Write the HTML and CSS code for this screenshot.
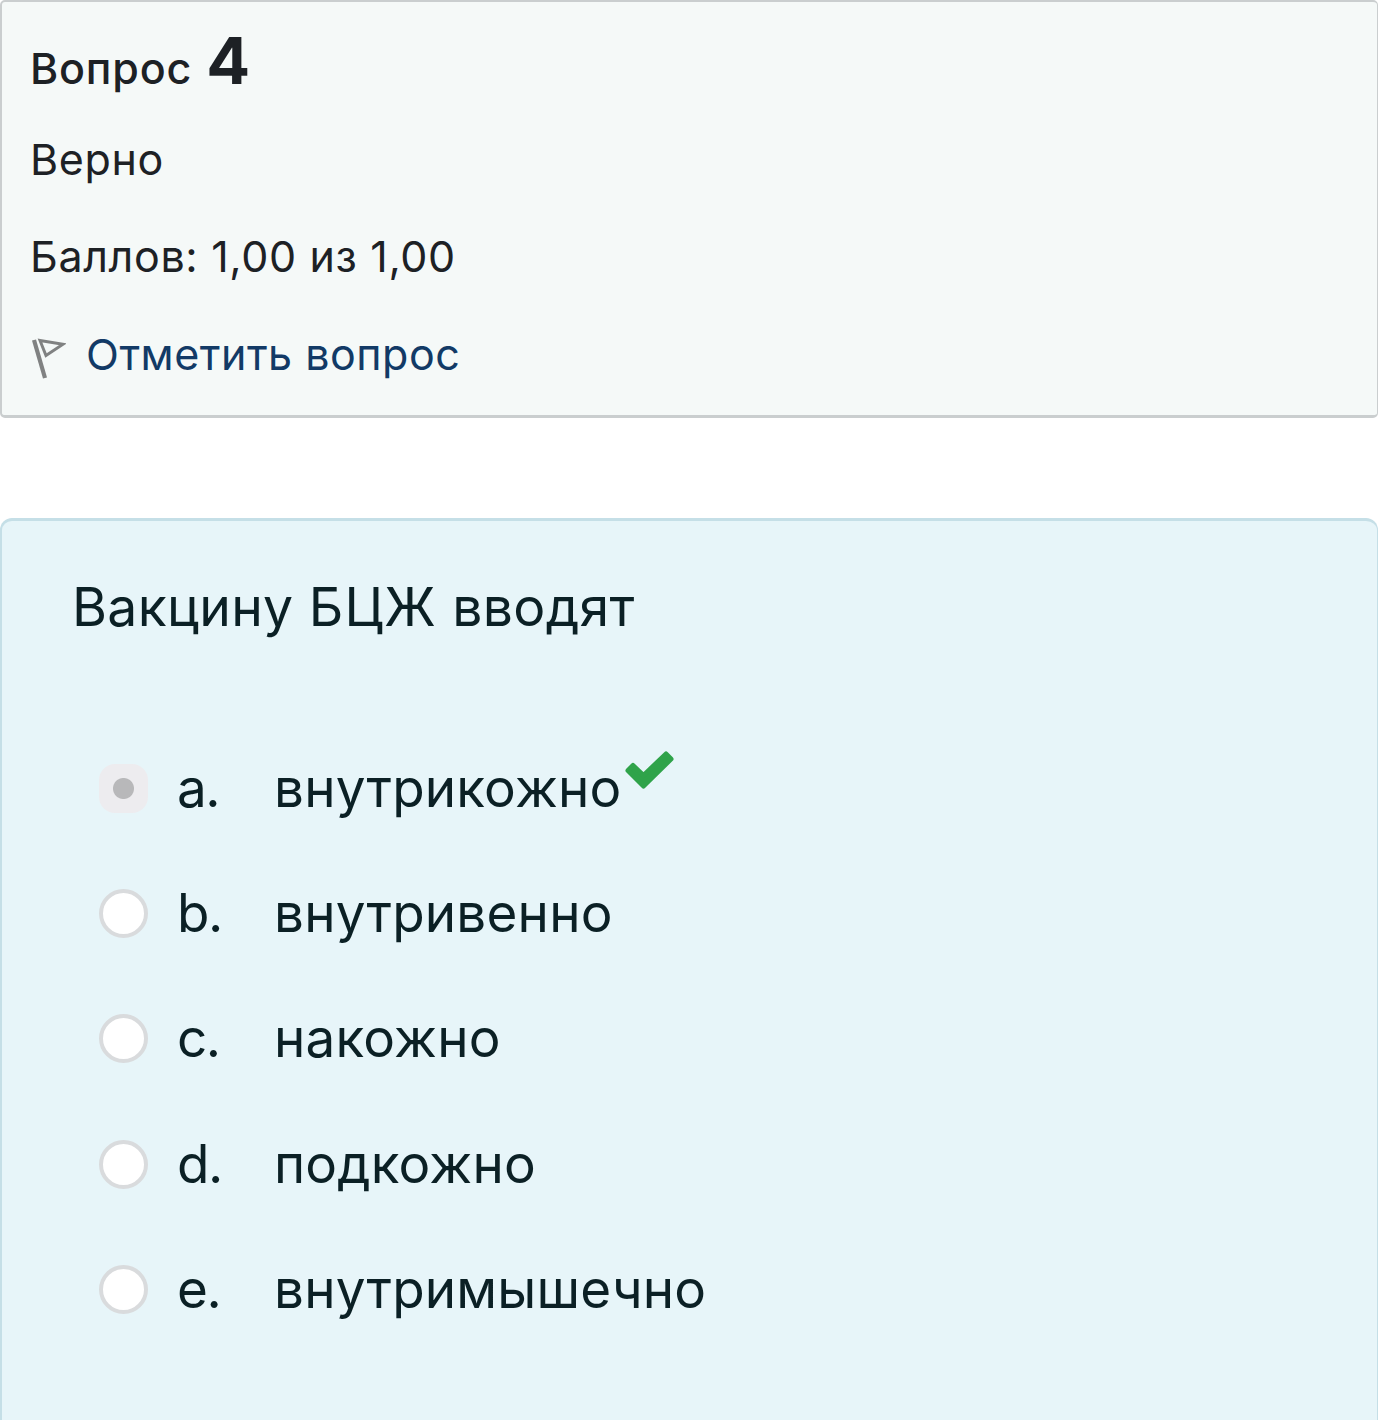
FILE: index.html
```html
<!DOCTYPE html>
<html lang="ru">
<head>
    <meta charset="UTF-8">
    <meta name="viewport" content="width=device-width, initial-scale=1.0">
    <title>Вопрос 4</title>
    <link rel="stylesheet" href="styles.css">
</head>
<body>
    <div class="question">
        <!-- Question info -->
        <div class="info">
            <h3 class="number">Вопрос <span class="qno">4</span></h3>
            <div class="state">Верно</div>
            <div class="grade">Баллов: 1,00 из 1,00</div>
            <a class="flag">
                <svg class="flag-icon" width="36" height="44" viewBox="0 0 36 44" fill="none" stroke="#808282">
                    <path d="M4 2L15 40" stroke-width="4.2"/>
                    <path d="M10 2.5L33 6.2L16 17.5Z" stroke-width="3"/>
                </svg>
                <span class="flag-label">Отметить вопрос</span>
            </a>
        </div>

        <!-- Question body -->
        <div class="content">
            <div class="qtext">Вакцину <span class="abbr">БЦЖ</span> вводят</div>
            <div class="answers">
                <div class="answer">
                    <span class="radio checked"></span>
                    <span class="letter">a.</span>
                    <span class="text">внутрикожно</span>
                    <svg class="check" width="50" height="40" viewBox="0 0 50 40">
                        <path d="M4 20.5L9 15.5L19.5 25.5L42 4L47 9L19.5 36Z" fill="#2fa34a" stroke="#2fa34a" stroke-width="5" stroke-linejoin="round"/>
                    </svg>
                </div>
                <div class="answer">
                    <span class="radio"></span>
                    <span class="letter">b.</span>
                    <span class="text">внутривенно</span>
                </div>
                <div class="answer">
                    <span class="radio"></span>
                    <span class="letter">c.</span>
                    <span class="text">накожно</span>
                </div>
                <div class="answer">
                    <span class="radio"></span>
                    <span class="letter">d.</span>
                    <span class="text">подкожно</span>
                </div>
                <div class="answer">
                    <span class="radio"></span>
                    <span class="letter">e.</span>
                    <span class="text">внутримышечно</span>
                </div>
            </div>
        </div>
    </div>
</body>
</html>
```
FILE: styles.css
```css
* {
    box-sizing: border-box;
}
body {
    margin: 0;
    background: #fff;
    font-family: Inter, "Liberation Sans", sans-serif;
    color: #1d2125;
}
.question {
    height: 1420px;
    display: flex;
    flex-direction: column;
    overflow: hidden;
}
.info {
    height: 418px;
    flex: none;
    padding: 29px 28px 0;
    background: #f5f9f8;
    border: 2px solid #cacecf;
    border-bottom-width: 3px;
    border-right-width: 1px;
    border-radius: 5px;
    font-size: 43px;
    line-height: 60px;
    letter-spacing: 0.65px;
}
.number {
    margin: 0;
    height: 98px;
    font-size: 43px;
    font-weight: 500;
    letter-spacing: 0.8px;
}
.qno {
    margin-left: 2px;
    font-size: 65px;
    font-weight: 700;
}
.state {
    margin-bottom: 37px;
}
.grade {
    margin-bottom: 38px;
}
.flag {
    display: flex;
    align-items: center;
    color: #123a66;
}
.flag-icon {
    margin-top: 12px;
    margin-right: 20px;
}
.flag-label {
    letter-spacing: 0.5px;
}
.content {
    flex: 1;
    margin-top: 100px;
    padding: 51px 72px 0 70px;
    background: #e7f5f9;
    border: 3px solid #c5dfe7;
    border-left-width: 2px;
    border-right-width: 1px;
    border-bottom: 0;
    border-radius: 12px 12px 0 0;
    color: #0b2025;
    font-size: 53px;
    line-height: 70px;
}
.qtext {
    font-size: 53.5px;
    letter-spacing: 0.3px;
}
.abbr {
    letter-spacing: 1.2px;
}
.answers {
    margin-top: 82px;
    padding-left: 27px;
}
.answer {
    display: flex;
    align-items: center;
    height: 125.3px;
}
.radio {
    width: 49px;
    height: 49px;
    flex: none;
    margin-right: 29px;
    margin-top: 3px;
    background: #fff;
    border: 4px solid #d9dbdd;
    border-radius: 50%;
}
.radio.checked {
    border: 0;
    background: radial-gradient(circle, #b8b8ba 10px, #edecef 11px);
    border-radius: 16px;
}
.letter,
.text {
    padding-top: 2px;
}
.letter {
    width: 97px;
    letter-spacing: -1.5px;
}
.text {
    letter-spacing: 0.2px;
}
.check {
    margin: -34px 0 0 2px;
}
```
